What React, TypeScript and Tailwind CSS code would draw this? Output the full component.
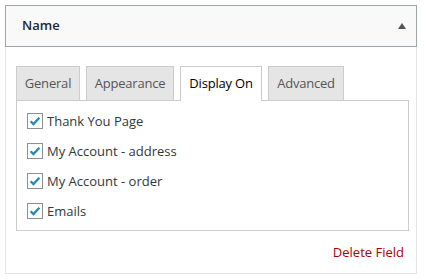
const options = ['Thank You Page', 'My Account - address', 'My Account - order', 'Emails']
const tabs = [
  { label: 'General', width: 'w-[64px]' },
  { label: 'Appearance', width: 'w-[88px]' },
  { label: 'Display On', width: 'w-[82px]' },
  { label: 'Advanced', width: 'w-[76px]' },
]

function Check() {
  return (
    <span className="flex h-4 w-4 flex-shrink-0 items-center justify-center border border-[#8c8f94] bg-white">
      <svg viewBox="0 0 16 16" className="h-[14px] w-[14px]">
        <path d="M3 8.2l3.2 3.3L13 4.2" fill="none" stroke="#1e8cbe" strokeWidth="2.6" />
      </svg>
    </span>
  )
}

export default function App() {
  return (
    <div className="bg-white pl-[5px] pt-[5px] text-[13px] text-[#32373c]" style={{ fontFamily: '"Open Sans", sans-serif' }}>
      <div className="w-[412px]">
        {/* Header */}
        <div className="flex h-[42px] items-center justify-between border border-[#a0a5aa] bg-[#f9f9f9] pl-4 pr-[10px]">
          <span className="font-semibold text-[#23282d]">Name</span>
          <svg viewBox="0 0 8 6" className="h-[6px] w-[8px]">
            <path d="M4 0L8 6H0z" fill="#555" />
          </svg>
        </div>

        {/* Body */}
        <div className="border-x border-b border-[#e5e5e5] pb-[10px] pl-[10px] pr-[7px] pt-[19px]">
          <div className="flex gap-[6px]">
            {tabs.map((t) => (
              <div
                key={t.label}
                className={
                  t.label === 'Display On'
                    ? `relative -mb-px flex h-[35px] ${t.width} items-center justify-center border border-b-0 border-[#ccc] bg-white tracking-[-0.2px] text-[#000]`
                    : `flex h-[34px] ${t.width} items-center justify-center border border-b-0 border-[#ccc] bg-[#e5e5e5] tracking-[-0.2px] text-[#555]`
                }
              >
                {t.label}
              </div>
            ))}
          </div>
          <div className="flex h-[131px] flex-col gap-[14px] border border-[#ccc] pl-[10px] pt-[12px]">
            {options.map((o) => (
              <label key={o} className="flex h-4 items-center gap-1">
                <Check />
                <span className="leading-4">{o}</span>
              </label>
            ))}
          </div>
          <div className="mt-[12px] flex justify-end pr-[5px]">
            <span className="text-[#a00]">Delete Field</span>
          </div>
        </div>
      </div>
    </div>
  )
}
